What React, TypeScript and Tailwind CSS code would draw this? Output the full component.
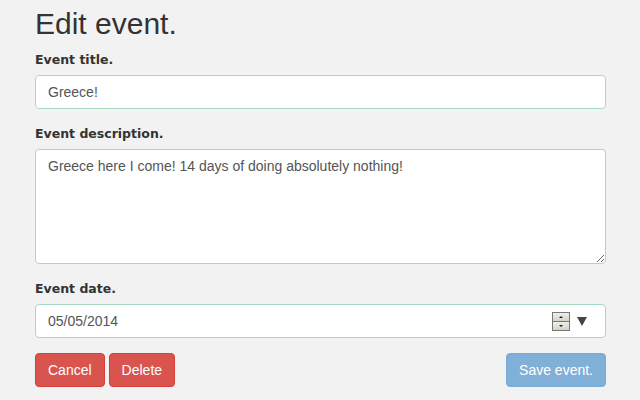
import React from "react";

const labelCls =
  "block h-[20px] leading-[20px] mb-[5px] text-[12.5px] font-bold text-[#333]";
const labelFont = { fontFamily: '"DejaVu Sans", Verdana, sans-serif' } as const;
const arial = { fontFamily: '"Liberation Sans", Arial, sans-serif' } as const;

export default function App() {
  return (
    <div className="w-full h-[400px] bg-[#f2f2f2] overflow-hidden" style={arial}>
      <div className="w-[571px] ml-[35px] pt-[7px]">
        <h1 className="text-[30px] leading-[33px] text-[#333] font-normal mb-[10px]" style={arial}>
          Edit event.
        </h1>

        <div className="mb-[15px]">
          <label className={labelCls} style={labelFont}>
            Event title.
          </label>
          <input
            className="block w-full h-[34px] px-[12px] border border-[#a6dac0] rounded-[4px] bg-white text-[14px] text-[#555] outline-none"
            style={arial}
            defaultValue="Greece!"
          />
        </div>

        <div className="mb-[15px]">
          <label className={labelCls} style={labelFont}>
            Event description.
          </label>
          <textarea
            className="block w-full h-[115px] px-[12px] py-[6px] border border-[#a6dac0] rounded-[4px] bg-white text-[14px] leading-[20px] text-[#555] outline-none"
            style={arial}
            defaultValue="Greece here I come! 14 days of doing absolutely nothing!"
          />
        </div>

        <div className="mb-[15px]">
          <label className={labelCls} style={labelFont}>
            Event date.
          </label>
          <div
            className="flex items-center w-full h-[34px] pl-[12px] pr-[18px] border border-[#a6dac0] rounded-[4px] bg-white text-[14px] text-[#555]"
            style={arial}
          >
            <span className="flex-1">05/05/2014</span>
            <div className="flex flex-col w-[18px] h-[19px] border border-[#777] bg-[#777] gap-[1px]">
              <div className="flex-1 flex items-center justify-center bg-gradient-to-b from-[#f0eee9] to-[#d6d2ca]">
                <div className="w-0 h-0 border-l-[2px] border-r-[2px] border-b-[2px] border-l-transparent border-r-transparent border-b-[#222]" />
              </div>
              <div className="flex-1 flex items-center justify-center bg-gradient-to-b from-[#f0eee9] to-[#d6d2ca]">
                <div className="w-0 h-0 border-l-[2px] border-r-[2px] border-t-[2px] border-l-transparent border-r-transparent border-t-[#222]" />
              </div>
            </div>
            <div className="ml-[7px] w-0 h-0 border-l-[5px] border-r-[5px] border-t-[9px] border-l-transparent border-r-transparent border-t-[#444]" />
          </div>
        </div>

        <div className="flex items-center">
          <button
            className="h-[34px] px-[12px] border border-[#d43f3a] rounded-[4px] bg-[#d9534f] text-white text-[14px]"
            style={arial}
          >
            Cancel
          </button>
          <button
            className="ml-[4px] h-[34px] px-[12px] border border-[#d43f3a] rounded-[4px] bg-[#d9534f] text-white text-[14px]"
            style={arial}
          >
            Delete
          </button>
          <div className="flex-1" />
          <button
            className="h-[34px] px-[12px] border border-[#7aabd8] rounded-[4px] bg-[#80afd8] text-white text-[14px]"
            style={arial}
          >
            Save event.
          </button>
        </div>
      </div>
    </div>
  );
}
